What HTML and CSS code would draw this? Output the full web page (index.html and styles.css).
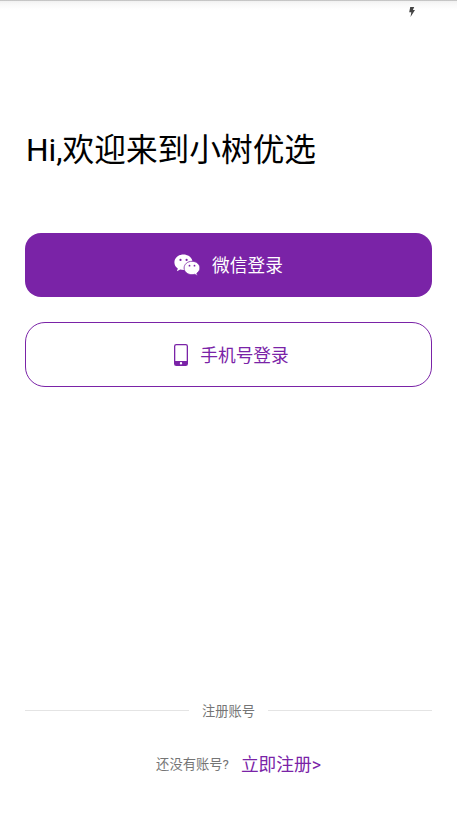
FILE: index.html
```html
<!DOCTYPE html>
<html lang="zh-CN">
<head>
<meta charset="utf-8">
<meta name="viewport" content="width=device-width, initial-scale=1">
<title>小树优选</title>
<link rel="stylesheet" href="styles.css">
</head>
<body>
<div class="status-bar">
  <svg class="bolt" viewBox="0 0 6 10"><path d="M1.2 0H5.2L3.9 2.9H6L1.5 10L2.3 5.2H.2Z"/></svg>
</div>
<main class="login">
  <h1 class="title">Hi,欢迎来到小树优选</h1>
  <button class="btn btn-wechat">
    <svg class="icon-wechat" viewBox="0 0 26 22">
      <path class="bubble" d="M9.5.5C4.4.5.4 4 .4 8.4c0 2.500 1.300 4.600 3.400 6.100L2.900 17.300l3.300-1.700c1.100.3 2.100.5 3.300.5 5.100 0 9.100-3.400 9.100-7.700S14.600.5 9.500.5Z"/>
      <circle cx="6.500" cy="5.900" r="1.100"/><circle cx="12.600" cy="5.900" r="1.100"/>
      <path class="bubble front" d="M18 7.300c-4.400 0-7.900 2.900-7.900 6.700s3.500 6.700 7.900 6.700c.9 0 1.800-.2 2.600-.4l2.900 1.500-.7-2.500c1.800-1.300 3.100-3.100 3.100-5.300 0-3.800-3.500-6.700-7.900-6.700Z"/>
      <circle cx="15.500" cy="11.700" r=".9"/><circle cx="20.500" cy="11.700" r=".9"/>
    </svg>
    <span>微信登录</span>
  </button>
  <button class="btn btn-phone">
    <svg class="icon-phone" viewBox="0 0 14 22">
      <path fill-rule="evenodd" d="M2.300 0H11.700A2.300 2.300 0 0 1 14 2.300V19.700A2.300 2.300 0 0 1 11.700 22H2.300A2.300 2.300 0 0 1 0 19.700V2.300A2.300 2.300 0 0 1 2.300 0ZM2.300 1.300Q1.300 1.300 1.300 2.300V17H12.700V2.300Q12.700 1.300 11.700 1.300ZM7 18.100a1.200 1.200 0 1 0 0 2.400a1.200 1.200 0 1 0 0-2.400Z"/>
    </svg>
    <span>手机号登录</span>
  </button>
</main>
<footer class="register">
  <div class="divider"><span>注册账号</span></div>
  <p class="prompt"><span>还没有账号?</span><a class="link">立即注册&gt;</a></p>
</footer>
</body>
</html>
```
FILE: styles.css
```css
* { box-sizing: border-box; }
body {
  margin: 0;
  height: 814px;
  display: flex;
  flex-direction: column;
  background: #fff;
  font-family: Roboto, "Noto Sans CJK SC", sans-serif;
  overflow: hidden;
}
.status-bar {
  height: 24px;
  padding: 7px 42px 0 0;
  display: flex;
  justify-content: flex-end;
  align-items: flex-start;
  background: linear-gradient(#c3c3c3 0, #c8c8c8 1px, #f1f1f1 1px, #f8f8f8 4px, #fff 10px);
}
.bolt { width: 6px; height: 10px; fill: #444; }
.login {
  flex: 1;
  padding: 103px 25px 0;
}
.title {
  margin: 0 0 58px;
  padding-left: 1px;
  height: 48px;
  line-height: 48px;
  font-size: 31.7px;
  font-weight: 400;
  color: #000;
  white-space: nowrap;
}
.btn {
  width: 100%;
  display: flex;
  align-items: center;
  justify-content: center;
  padding: 0;
  font: inherit;
  font-size: 17.7px;
  line-height: 26px;
}
.btn span { padding-top: 2px; }
.btn-wechat {
  height: 64px;
  border: 0;
  border-radius: 16px;
  background: #7a23a7;
  color: #fff;
  gap: 12px;
}
.btn-phone {
  height: 65px;
  margin-top: 25px;
  padding-left: 6px;
  border: 1.300px solid #7a23a7;
  border-radius: 20px;
  background: #fff;
  color: #7a23a7;
  gap: 12px;
}
.icon-wechat { width: 26px; height: 22px; fill: #7a23a7; }
.bubble { fill: #fff; }
.front { stroke: #7a23a7; stroke-width: .8; }
.icon-phone { width: 14px; height: 22px; fill: #7a23a7; }
.register { height: 114px; padding: 0 25px; }
.divider {
  display: flex;
  align-items: center;
  gap: 13px;
  height: 21px;
  font-size: 13.3px;
  line-height: 20px;
  color: #757575;
}
.divider span { padding-top: 2px; }
.divider::before, .divider::after {
  content: "";
  flex: 1;
  height: 1px;
  background: #e4e4e4;
}
.prompt {
  margin: 30px 0 0;
  padding-left: 20px;
  height: 28px;
  display: flex;
  align-items: center;
  justify-content: center;
  gap: 12px;
  font-size: 13.3px;
  line-height: 28px;
  color: #757575;
}
.link { font-size: 17.7px; color: #7a23a7; }
```
